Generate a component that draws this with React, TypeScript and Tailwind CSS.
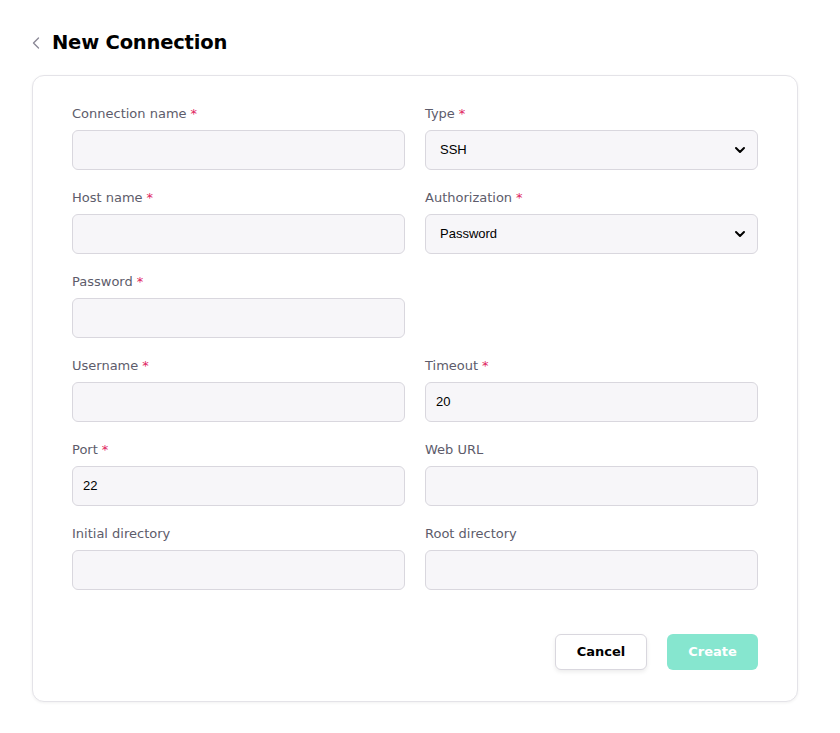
import { ChevronDown, ChevronLeft } from "lucide-react";

type Field = {
  label: string;
  required?: boolean;
  value?: string;
  select?: boolean;
};

const rows: (Field | null)[][] = [
  [
    { label: "Connection name", required: true },
    { label: "Type", required: true, value: "SSH", select: true },
  ],
  [
    { label: "Host name", required: true },
    { label: "Authorization", required: true, value: "Password", select: true },
  ],
  [{ label: "Password", required: true }, null],
  [
    { label: "Username", required: true },
    { label: "Timeout", required: true, value: "20" },
  ],
  [
    { label: "Port", required: true, value: "22" },
    { label: "Web URL" },
  ],
  [{ label: "Initial directory" }, { label: "Root directory" }],
];

function FormField({ field }: { field: Field }) {
  return (
    <div className="flex flex-col">
      <label className="mb-[8px] text-[13px] leading-4 text-[#5d5c6b]">
        {field.label}
        {field.required && <span className="ml-1 text-[#e0245e]">*</span>}
      </label>
      <div className="relative flex h-10 items-center rounded-md border border-[#d9d7de] bg-[#f7f6f9]">
        {field.select ? (
          <>
            <span className="pl-[14px] font-['Liberation_Sans',sans-serif] text-[13px] text-black">
              {field.value}
            </span>
            <ChevronDown
              className="absolute right-[9px] h-4 w-4 text-black"
              strokeWidth={3}
            />
          </>
        ) : (
          <span className="pl-[10px] font-['Liberation_Sans',sans-serif] text-[13px] text-black">
            {field.value}
          </span>
        )}
      </div>
    </div>
  );
}

export default function App() {
  return (
    <div className="min-h-[733px] bg-white px-8 pt-[30px] font-['DejaVu_Sans',sans-serif]">
      <div className="flex h-[26px] items-center">
        <ChevronLeft className="-ml-[6px] h-5 w-5 text-[#8a8896]" strokeWidth={1.6} />
        <h1 className="ml-[6px] text-[19.5px] font-bold tracking-[-0.2px] text-black">
          New Connection
        </h1>
      </div>

      <div className="mt-[19px] w-[766px] rounded-xl border border-[#e4e3e8] bg-white px-[39px] pb-[31px] pt-[30px] shadow-[0_1px_3px_rgba(0,0,0,0.06)]">
        <div className="grid grid-cols-2 gap-x-5 gap-y-5">
          {rows.flatMap((row, i) =>
            row.map((f, j) =>
              f ? <FormField key={`${i}-${j}`} field={f} /> : <div key={`${i}-${j}`} />
            )
          )}
        </div>

        <div className="mt-11 flex justify-end gap-5">
          <button className="h-9 w-[92px] rounded-md border border-[#d9d7de] bg-white text-[13px] font-semibold text-black shadow-[0_2px_4px_rgba(0,0,0,0.08)]">
            Cancel
          </button>
          <button className="h-9 w-[91px] rounded-md bg-[#86e6cf] text-[13px] font-bold text-white">
            Create
          </button>
        </div>
      </div>
    </div>
  );
}
